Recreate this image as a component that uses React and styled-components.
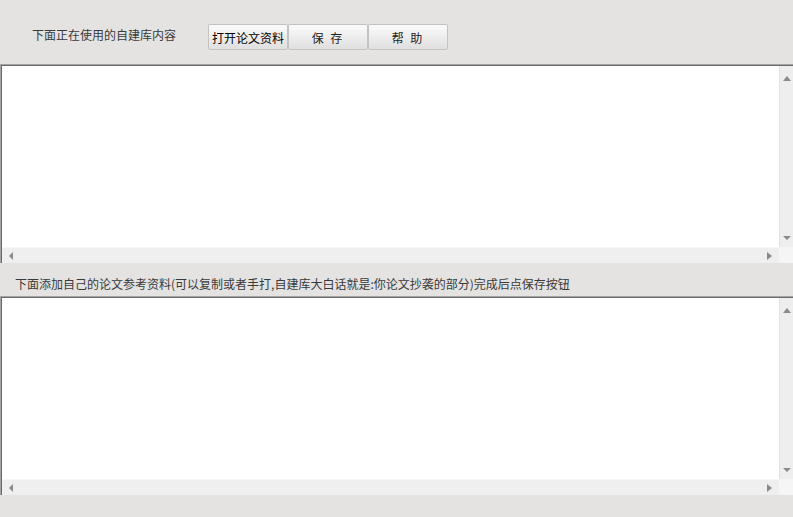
import React from 'react'
import styled, { createGlobalStyle } from 'styled-components'

const GlobalStyle = createGlobalStyle`
  html, body {
    margin: 0;
    padding: 0;
    background: #e4e3e1;
  }
  body {
    font-family: "Noto Sans CJK SC", "Liberation Sans", sans-serif;
  }
`

const Window = styled.div`
  width: 793px;
  height: 517px;
  background: #e4e3e1;
  display: flex;
  flex-direction: column;
  overflow: hidden;
`

const Toolbar = styled.div`
  height: 64px;
  display: flex;
  align-items: flex-start;
  padding: 24px 0 0 32px;
  box-sizing: border-box;
`

const Label = styled.div`
  font-size: 12px;
  line-height: 14px;
  color: #3a3a3a;
  white-space: nowrap;
  flex-shrink: 0;
  margin-top: ${(p) => p.$top || 4}px;
  width: ${(p) => p.$width || 'auto'};
`

const ButtonGroup = styled.div`
  display: flex;
  margin-left: 33px;
`

const Button = styled.button`
  width: 80px;
  height: 26px;
  padding: 0;
  margin: 0;
  border: 1px solid #c4c3c1;
  border-radius: 2px;
  background: linear-gradient(#fbfbfb, #ebeaea 60%, #e0dfdf);
  font-family: "Noto Sans CJK SC", sans-serif;
  font-size: 12px;
  color: ${(p) => (p.$strong ? '#000' : '#222')};
  letter-spacing: ${(p) => (p.$strong ? '0' : '2px')};
  white-space: pre;
  cursor: default;
`

const Panel = styled.div`
  height: 199px;
  box-sizing: border-box;
  border-top: 1px solid #a3a3a3;
  border-left: 1px solid #a3a3a3;
  box-shadow: inset 1px 1px 0 #6b6b6b;
  display: grid;
  grid-template-columns: 1fr 14px;
  grid-template-rows: 1fr 16px;
  background: #fff;
`

const TextArea = styled.textarea`
  border: none;
  outline: none;
  resize: none;
  margin: 1px 0 0 1px;
  padding: 2px 4px;
  background: #fff;
  font-family: "Noto Sans CJK SC", sans-serif;
  font-size: 12px;
  overflow: hidden;
`

const VScroll = styled.div`
  background: #eeeeee;
  border-left: 1px solid #e2e2e2;
  margin-top: 1px;
  display: flex;
  flex-direction: column;
  justify-content: space-between;
  align-items: center;
  padding: 10px 0 7px;
`

const HScroll = styled.div`
  background: #efefef;
  border-top: 1px solid #f7f7f7;
  margin-left: 1px;
  display: flex;
  justify-content: space-between;
  align-items: center;
  padding: 0 7px 0 7px;
`

const Corner = styled.div`
  background: #f5f5f5;
`

const Arrow = styled.span`
  width: 0;
  height: 0;
  border-style: solid;
  ${(p) =>
    p.$dir === 'up' &&
    'border-width: 0 4px 5px 4px; border-color: transparent transparent #8a8a8a transparent;'}
  ${(p) =>
    p.$dir === 'down' &&
    'border-width: 4px 4px 0 4px; border-color: #8a8a8a transparent transparent transparent;'}
  ${(p) =>
    p.$dir === 'left' &&
    'border-width: 4px 4px 4px 0; border-color: transparent #8a8a8a transparent transparent;'}
  ${(p) =>
    p.$dir === 'right' &&
    'border-width: 4px 0 4px 5px; border-color: transparent transparent transparent #8a8a8a;'}
`

const Caption = styled.div`
  height: 33px;
  display: flex;
  align-items: center;
  padding: 7px 0 0 15px;
  font-size: 12px;
  color: #3a3a3a;
  white-space: nowrap;
  box-sizing: border-box;
`

const ScrollText = () => (
  <Panel>
    <TextArea spellCheck={false} />
    <VScroll>
      <Arrow $dir="up" />
      <Arrow $dir="down" />
    </VScroll>
    <HScroll>
      <Arrow $dir="left" />
      <Arrow $dir="right" />
    </HScroll>
    <Corner />
  </Panel>
)

const App = () => {
  return (
    <Window>
      <GlobalStyle />
      <Toolbar>
        <Label $top={4} $width="143px">下面正在使用的自建库内容</Label>
        <ButtonGroup>
          <Button $strong>打开论文资料</Button>
          <Button>保 存</Button>
          <Button>帮 助</Button>
        </ButtonGroup>
      </Toolbar>
      <ScrollText />
      <Caption>下面添加自己的论文参考资料(可以复制或者手打,自建库大白话就是:你论文抄袭的部分)完成后点保存按钮</Caption>
      <ScrollText />
    </Window>
  )
}

export default App
